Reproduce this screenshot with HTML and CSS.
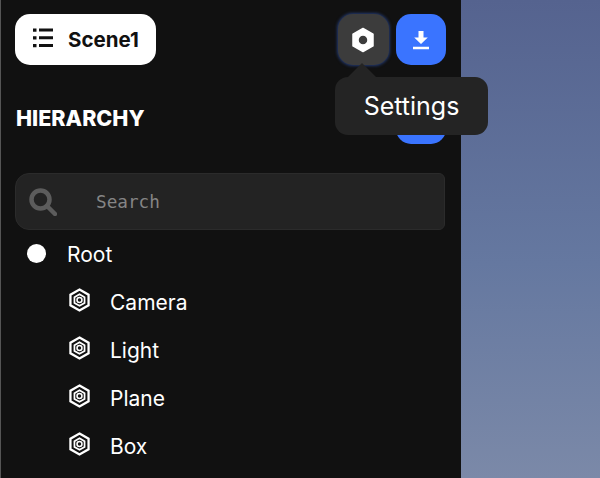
FILE: index.html
```html
<!DOCTYPE html>
<html lang="en">
<head>
<meta charset="utf-8">
<title>Scene1</title>
<link rel="stylesheet" href="styles.css">
</head>
<body>
<div class="app">
  <aside class="sidebar">
    <header class="topbar">
      <button class="scene-btn">
        <svg class="list-icon" viewBox="0 0 20 20" width="20" height="20"><path d="M0 .5h3.500v3.300H0zM0 8.200h3.500v3.300H0zM0 15.900h3.500v3.300H0zM6 .6h14v3H6zM6 8.300h14v3H6zM6 16h14v3H6z" fill="#111"/></svg>
        <span>Scene1</span>
      </button>
      <div class="actions">
        <div class="settings-wrap">
          <button class="icon-btn settings">
            <svg viewBox="0 0 24 26" width="24" height="26"><path fill-rule="evenodd" stroke="#fff" stroke-width="1.500" stroke-linejoin="round" d="M12 1.500l10 5.600v11.800L12 24.500 2 18.900V7.100zM12 8a5 5 0 1 0 0 10 5 5 0 0 0 0-10z" fill="#fff"/></svg>
          </button>
          <div class="tooltip">Settings</div>
        </div>
        <button class="icon-btn primary">
          <svg viewBox="0 0 20 20" width="20" height="20"><path d="M7.500 1h5v6.500h4.300L10 14 3.200 7.500h4.300zM2 16.800h16v2.400H2z" fill="#fff"/></svg>
        </button>
      </div>
    </header>

    <div class="section-head">
      <h2>HIERARCHY</h2>
      <button class="icon-btn primary"></button>
    </div>

    <label class="search">
      <svg viewBox="0 0 28 28" width="28" height="28"><circle cx="11.500" cy="11.500" r="9" fill="none" stroke="#5c5c5c" stroke-width="4.500"/><path d="M18 18l8 8" stroke="#5c5c5c" stroke-width="4.500" stroke-linecap="round"/></svg>
      <span>Search</span>
    </label>

    <ul class="tree">
      <li class="root"><i class="dot"></i>Root</li>
      <li class="node"><svg class="hex" viewBox="0 0 22 26" width="21" height="25"><g fill="none" stroke="#fff"><path stroke-width="2.400" d="M11 1.500l9.500 5.500v11L11 23.500 1.500 18V7z"/><path stroke-width="1.800" d="M11 6.500l5.300 3v6L11 18.500l-5.300-3v-6z"/><circle cx="11" cy="12.500" r="2.600" stroke-width="1.600"/></g></svg>Camera</li>
      <li class="node"><svg class="hex" viewBox="0 0 22 26" width="21" height="25"><g fill="none" stroke="#fff"><path stroke-width="2.400" d="M11 1.500l9.500 5.500v11L11 23.500 1.500 18V7z"/><path stroke-width="1.800" d="M11 6.500l5.300 3v6L11 18.500l-5.300-3v-6z"/><circle cx="11" cy="12.500" r="2.600" stroke-width="1.600"/></g></svg>Light</li>
      <li class="node"><svg class="hex" viewBox="0 0 22 26" width="21" height="25"><g fill="none" stroke="#fff"><path stroke-width="2.400" d="M11 1.500l9.500 5.500v11L11 23.500 1.500 18V7z"/><path stroke-width="1.800" d="M11 6.500l5.300 3v6L11 18.500l-5.300-3v-6z"/><circle cx="11" cy="12.500" r="2.600" stroke-width="1.600"/></g></svg>Plane</li>
      <li class="node"><svg class="hex" viewBox="0 0 22 26" width="21" height="25"><g fill="none" stroke="#fff"><path stroke-width="2.400" d="M11 1.500l9.500 5.500v11L11 23.500 1.500 18V7z"/><path stroke-width="1.800" d="M11 6.500l5.300 3v6L11 18.500l-5.300-3v-6z"/><circle cx="11" cy="12.500" r="2.600" stroke-width="1.600"/></g></svg>Box</li>
    </ul>
  </aside>
  <main class="viewport"></main>
</div>
</body>
</html>
```

FILE: styles.css
```css
* { box-sizing: border-box; }

html, body {
  margin: 0;
  height: 100%;
  overflow: hidden;
}

body {
  font-family: Inter, "Liberation Sans", sans-serif;
  background: #111;
}

button {
  border: 0;
  padding: 0;
  font: inherit;
}

.app {
  display: flex;
  height: 478px;
}

.sidebar {
  width: 461px;
  height: 478px;
  flex: none;
  background: #111;
  border-left: 1px solid #555;
  padding: 14px 15px 0 14px;
  overflow: visible;
}

.viewport {
  flex: 1;
  background: linear-gradient(180deg, #55638f 0%, #6578a0 55%, #7b89a8 100%);
}

.topbar {
  display: flex;
  justify-content: space-between;
  height: 51px;
}

.scene-btn {
  width: 141px;
  height: 51px;
  background: #fff;
  border-radius: 15px;
  display: flex;
  align-items: center;
  padding-left: 18px;
  gap: 15px;
  font-size: 20.500px;
  font-weight: 700;
  color: #111;
}

.list-icon { display: block; margin-top: -4px; }

.actions {
  display: flex;
  gap: 7px;
}

.settings-wrap { position: relative; }

.icon-btn {
  width: 50px;
  height: 51px;
  border-radius: 15px;
  display: flex;
  align-items: center;
  justify-content: center;
}

.icon-btn.primary { background: #3a74ff; }

.icon-btn.settings {
  width: 51px;
  background: #3c3c3c;
  box-shadow: 0 0 3px 1px rgba(50, 90, 190, 0.55);
}

.icon-btn.settings svg { margin-left: -1px; }

.tooltip {
  position: absolute;
  left: -3px;
  top: 63px;
  width: 153px;
  height: 58px;
  background: #242424;
  border-radius: 13px;
  color: #fff;
  font-size: 25px;
  font-weight: 400;
  display: flex;
  align-items: center;
  justify-content: center;
}

.tooltip::before {
  content: "";
  position: absolute;
  left: 13px;
  top: -14px;
  border-left: 14px solid transparent;
  border-right: 14px solid transparent;
  border-bottom: 14px solid #242424;
}

.section-head {
  display: flex;
  justify-content: space-between;
  align-items: center;
  margin-top: 28px;
  height: 51px;
}

.section-head h2 {
  margin: 0 0 1px 1px;
  color: #fff;
  font-size: 21.500px;
  font-weight: 800;
}

.search {
  display: flex;
  align-items: center;
  height: 57px;
  margin-top: 29px;
  margin-right: 1px;
  background: #232323;
  border: 1px solid #2b2b2b;
  border-radius: 14px 6px 6px 14px;
  padding-left: 13px;
  gap: 39px;
  color: #858585;
  font-family: "DejaVu Sans Mono", monospace;
  font-size: 17.700px;
}

.tree {
  list-style: none;
  margin: 0;
  padding: 0;
  color: #fff;
  font-size: 21px;
}

.tree li {
  display: flex;
  align-items: center;
  height: 48px;
}

.root { padding-left: 12px; }

.dot {
  width: 19px;
  height: 19px;
  border-radius: 50%;
  background: #fff;
  margin-right: 21px;
  margin-top: -2px;
}

.node { padding-left: 54px; }

.hex {
  margin-right: 20px;
  margin-top: -3px;
}
```
